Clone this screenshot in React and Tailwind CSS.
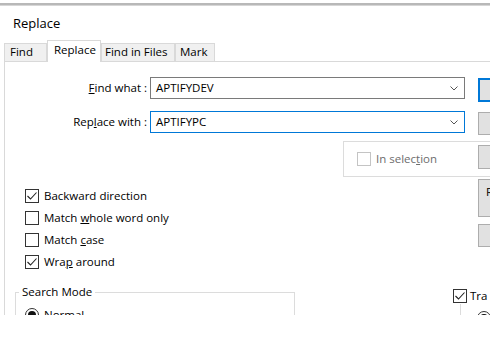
import React from 'react'

function Check({ checked, disabled }) {
  return (
    <span
      className={`w-[14px] h-[14px] border bg-white flex items-center justify-center shrink-0 ${
        disabled ? 'border-[#c4c4c4]' : 'border-[#333333]'
      }`}
    >
      {checked && (
        <svg width="12" height="12" viewBox="0 0 12 12">
          <path d="M1.5 6 L4.5 9 L10.5 2.5" fill="none" stroke="#222" strokeWidth="1.1" />
        </svg>
      )}
    </span>
  )
}

function Radio({ checked }) {
  return (
    <span className="w-[14px] h-[14px] rounded-full border border-[#333333] bg-white flex items-center justify-center shrink-0">
      {checked && <span className="w-[8px] h-[8px] rounded-full bg-[#111]" />}
    </span>
  )
}

function Combo({ value, focused }) {
  return (
    <div
      className={`w-[315px] h-[22px] shrink-0 border bg-white flex items-center justify-between pl-[5px] pr-[6px] ${
        focused ? 'border-[#0078d7]' : 'border-[#7a7a7a]'
      }`}
    >
      <span>{value}</span>
      <svg width="8" height="5" viewBox="0 0 8 5">
        <path d="M0.5 0.5 L4 4 L7.5 0.5" fill="none" stroke="#555" strokeWidth="1" />
      </svg>
    </div>
  )
}

function Tab({ label, active, width, pad }) {
  if (active) {
    return (
      <div
        className={`relative z-10 h-[22px] -mb-[1px] bg-white border-x border-t border-[#d9d9d9] pt-[1px] leading-[16px] ${width} ${pad}`}
      >
        {label}
      </div>
    )
  }
  return (
    <div className={`h-[18px] bg-[#f0f0f0] border-x border-t border-[#d9d9d9] leading-[16px] ${width} ${pad}`}>
      {label}
    </div>
  )
}

const options = [
  { key: 'back', label: <>Backward direction</>, checked: true },
  { key: 'whole', label: <>Match <u>w</u>hole word only</>, checked: false },
  { key: 'case', label: <>Match <u>c</u>ase</>, checked: false },
  { key: 'wrap', label: <>Wra<u>p</u> around</>, checked: true },
]

export default function App() {
  return (
    <div className="w-[500px] h-[339px] bg-white overflow-hidden font-['Open_Sans',sans-serif] text-[11.5px] text-black">
      <div className="w-[490px] h-[315px] overflow-hidden flex flex-col">
        <div className="shrink-0 mt-[3px] h-[3px] bg-[#b8b8b8] border-b border-[#d6d6d6]" />

        <div className="shrink-0 h-[34px] pt-[8px] pl-[13px] text-[13px] leading-[18px]">Replace</div>

        <div className="shrink-0 h-[21px] flex items-end pl-[4px]">
          <Tab label="Find" width="w-[43px]" pad="pl-[5px]" />
          <Tab label="Replace" active width="w-[54px]" pad="pl-[6px]" />
          <Tab label="Find in Files" width="w-[74px]" pad="pl-[3px]" />
          <Tab label="Mark" width="w-[40px]" pad="pl-[4px]" />
        </div>

        <div className="shrink-0 h-[300px] ml-[4px] border-l border-t border-[#d9d9d9] flex">
          <div className="w-[473px] shrink-0 flex flex-col">
            <div className="shrink-0 mt-[15px] h-[22px] flex items-center gap-[3px]">
              <span className="w-[142px] text-right">
                <u>F</u>ind what :
              </span>
              <Combo value="APTIFYDEV" />
            </div>
            <div className="shrink-0 mt-[12px] h-[22px] flex items-center gap-[3px]">
              <span className="w-[142px] text-right">
                Rep<u>l</u>ace with :
              </span>
              <Combo value="APTIFYPC" focused />
            </div>

            <div className="shrink-0 mt-[8px] ml-[338px] w-[160px] h-[36px] border border-[#dcdcdc] flex items-center gap-[5px] pl-[13px] text-[#6d6d6d]">
              <Check disabled />
              <span>
                In selec<u>t</u>ion
              </span>
            </div>

            <div className="shrink-0 mt-[8px] ml-[20px] flex flex-col">
              {options.map((o) => (
                <div key={o.key} className="h-[22px] flex items-center gap-[5px]">
                  <Check checked={o.checked} />
                  <span>{o.label}</span>
                </div>
              ))}
            </div>

            <div className="shrink-0 mt-[11px] flex items-start">
              <fieldset className="ml-[10px] w-[280px] h-[60px] shrink-0 border border-[#dcdcdc] px-[9px]">
                <legend className="ml-[-6px] px-[3px] leading-[16px]">Search Mode</legend>
                <div className="mt-[6px] flex items-center gap-[5px]">
                  <Radio checked />
                  <span>Normal</span>
                </div>
              </fieldset>
              <div className="ml-[158px] mt-[3px] flex flex-col">
                <div className="flex items-center gap-[3px] whitespace-nowrap">
                  <Check checked />
                  <span>Tra</span>
                </div>
                <div className="ml-[7px] h-[30px] border-l border-[#dcdcdc] pl-[16px] pt-[7px]">
                  <Radio checked />
                </div>
              </div>
            </div>
          </div>

          <div className="w-[90px] shrink-0 flex flex-col">
            <div className="shrink-0 mt-[16px] h-[24px] bg-[#e1e1e1] border-2 border-[#0078d7]" />
            <div className="shrink-0 mt-[10px] h-[23px] bg-[#e1e1e1] border border-[#adadad]" />
            <div className="shrink-0 mt-[10px] h-[24px] bg-[#e1e1e1] border border-[#adadad]" />
            <div className="shrink-0 mt-[10px] h-[38px] bg-[#e1e1e1] border border-[#adadad] pl-[7px] pt-[4px] leading-[16px] overflow-hidden">
              <span className="block">R</span>
            </div>
            <div className="shrink-0 mt-[7px] h-[23px] bg-[#e1e1e1] border border-[#adadad]" />
          </div>
        </div>
      </div>
    </div>
  )
}
